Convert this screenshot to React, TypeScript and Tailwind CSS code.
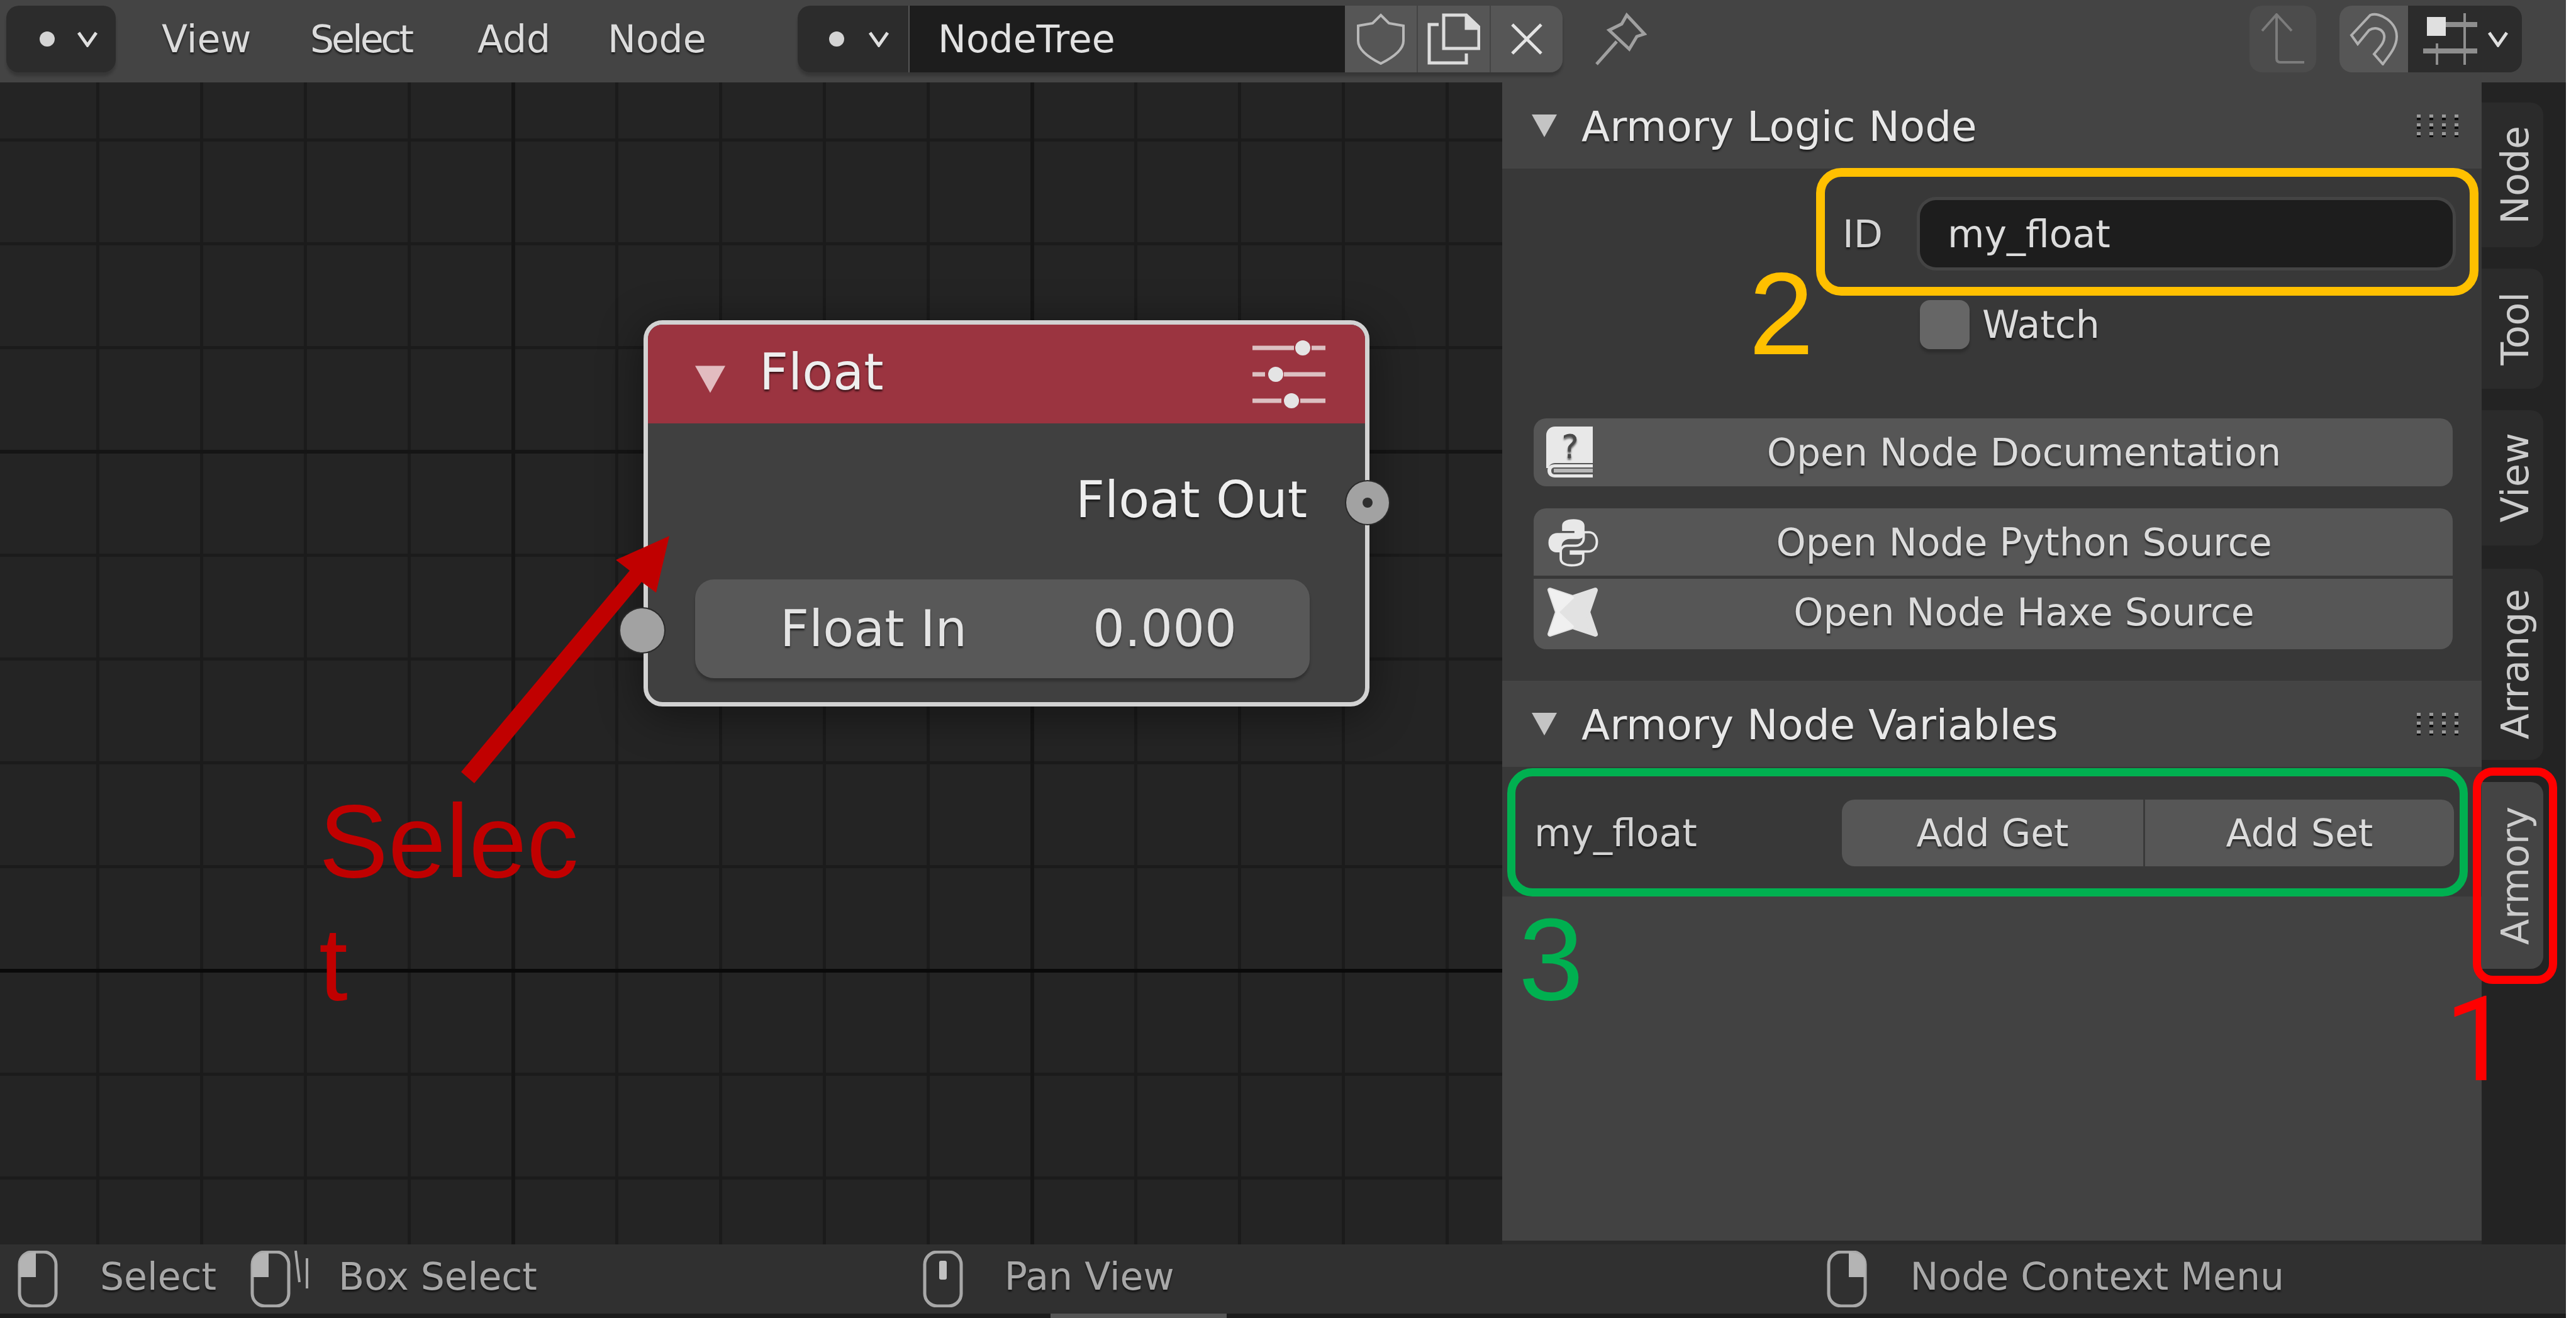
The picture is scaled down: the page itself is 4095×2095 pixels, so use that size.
import type { ReactNode } from "react";

const textShadow = "[text-shadow:0_3px_3px_rgba(0,0,0,0.6)]";

function Chevron({ className = "" }: { className?: string }): JSX.Element {
  return (
    <svg width="34" height="26" viewBox="0 0 34 26" className={className}>
      <polyline points="3,3 17,23 31,3" fill="none" stroke="#e0e0e0" strokeWidth="5" />
    </svg>
  );
}

function Dot(): JSX.Element {
  return <span className="h-[24px] w-[24px] rounded-full bg-[#d4d4d4]" />;
}

function Triangle({ className = "", fill = "#c4c4c4" }: { className?: string; fill?: string }): JSX.Element {
  return (
    <svg width="40" height="36" viewBox="0 0 40 36" className={className}>
      <polygon points="0,0 40,0 20,36" fill={fill} />
    </svg>
  );
}

function Grip(): JSX.Element {
  const columns = [0, 20, 40, 60];
  const rows = [0, 14, 28];
  return (
    <svg width="68" height="36" viewBox="0 0 68 36">
      {columns.map((x) =>
        rows.map((y) => (
          <g key={`${x}-${y}`}>
            <rect x={x} y={y} width="6" height="5" fill="#9a9a9a" />
            <rect x={x} y={y + 5} width="6" height="4" fill="#0c0c0c" />
          </g>
        )),
      )}
    </svg>
  );
}

function Mouse({ button }: { button: "left" | "middle" | "right" | "box" }): JSX.Element {
  return (
    <svg width="94" height="90" viewBox="0 0 94 90" fill="none">
      <rect x="3" y="2" width="58" height="86" rx="20" stroke="#a8a8a8" strokeWidth="5" />
      {button === "left" || button === "box" ? <path d="M3 42V20C3 10 10 3 29 2V42Z" fill="#b4b4b4" /> : null}
      {button === "right" ? <path d="M61 42V20C61 10 54 3 35 2V42Z" fill="#b4b4b4" /> : null}
      {button === "middle" ? <rect x="26" y="16" width="12" height="30" rx="3" fill="#c0c0c0" /> : null}
      {button === "box" ? (
        <g stroke="#a8a8a8" strokeWidth="4">
          <path d="M72 0L78 50" />
          <path d="M90 12V60" />
        </g>
      ) : null}
    </svg>
  );
}

function Hint({ icon, label, className }: { icon: ReactNode; label: string; className: string }): JSX.Element {
  return (
    <div className={`flex items-center ${className}`}>
      {icon}
      <span className={`mb-[8px] text-[#a8a8a8] ${textShadow}`}>{label}</span>
    </div>
  );
}

function BookIcon(): JSX.Element {
  return (
    <svg width="74" height="82" viewBox="0 0 74 82" className="overflow-visible">
      <path d="M14 0H74V58H14C8 58 4 62 4 66H0V14C0 6 6 0 14 0Z" fill="#e8e8e8" />
      <path d="M74 60H14C6 60 2 64 2 70C2 77 7 81 14 81H74V76H14C10 76 8 74 8 70C8 67 10 65 14 65H74Z" fill="#e8e8e8" />
      <rect x="12" y="67" width="62" height="6" fill="#b8b8b8" />
      <text x="38" y="50" textAnchor="middle" fontFamily="DejaVu Sans, sans-serif" fontSize="52" fill="#4a4a4a">
        ?
      </text>
    </svg>
  );
}

function PythonIcon(): JSX.Element {
  const snake =
    "M12.5 1C8.8 1 7.2 2.3 7.2 4.2V6.6H12.8V7.6H5C3 7.6 1 9 1 12.2C1 15.2 2.8 16.8 4.6 16.8H7V14C7 12 8.6 10.4 10.6 10.4H14.6C16.2 10.4 17.4 9.2 17.4 7.6V4.2C17.4 2.2 15.6 1 12.5 1Z";
  return (
    <svg width="84" height="80" viewBox="0 0 24 24" preserveAspectRatio="none">
      <path d={snake} fill="#e8e8e8" />
      <path d={snake} transform="rotate(180 12 12)" fill="none" stroke="#e8e8e8" strokeWidth="1.1" />
    </svg>
  );
}

function HaxeIcon(): JSX.Element {
  return (
    <svg width="84" height="82" viewBox="0 0 84 82">
      <polygon
        points="6,6 42,18 78,6 66,41 78,76 42,64 6,76 18,41"
        fill="#e2e2e2"
        stroke="#e2e2e2"
        strokeWidth="8"
        strokeLinejoin="round"
      />
      <polygon points="6,6 42,18 18,41" fill="#f0f0f0" stroke="#f0f0f0" strokeWidth="4" strokeLinejoin="round" />
      <polygon points="6,76 42,64 18,41" fill="#f0f0f0" stroke="#f0f0f0" strokeWidth="4" strokeLinejoin="round" />
    </svg>
  );
}

function PanelButton({ icon, label, className }: { icon: ReactNode; label: string; className: string }): JSX.Element {
  return (
    <div
      className={`relative flex items-center justify-center bg-[#565656] pl-[98px] text-[#dcdcdc] ${textShadow} ${className}`}
    >
      <span className="absolute left-[20px]">{icon}</span>
      {label}
    </div>
  );
}

function PanelHeader({ title, height }: { title: string; height: string }): JSX.Element {
  return (
    <div className={`flex items-center bg-[#444444] pl-[47px] pr-[35px] ${height}`}>
      <Triangle />
      <span className={`ml-[39px] pt-[4px] text-[66px] text-[#e8e8e8] ${textShadow}`}>{title}</span>
      <span className="ml-auto">
        <Grip />
      </span>
    </div>
  );
}

function Tab({ label, className }: { label: string; className: string }): JSX.Element {
  return (
    <div className={`flex w-[98px] items-center justify-center rounded-r-[20px] pl-[8px] ${className}`}>
      <span className="rotate-180 text-[60px] leading-none [writing-mode:vertical-rl]">{label}</span>
    </div>
  );
}

function NodeCard(): JSX.Element {
  return (
    <div className="absolute left-[1023px] top-[378px] h-[614px] w-[1154px] rounded-[30px] border-[7px] border-[#d2d2d2] bg-[#404040] shadow-[0_12px_70px_rgba(0,0,0,0.45)]">
      <div className="flex h-[157px] items-center rounded-t-[23px] bg-[#9b3440] pl-[75px] pr-[63px]">
        <Triangle fill="#e2bcc0" className="mt-[16px] h-[48px] w-[48px]" />
        <span className={`mb-[6px] ml-[54px] text-[80px] text-[#eeeeee] ${textShadow}`}>Float</span>
        <svg width="116" height="110" viewBox="0 0 116 110" className="ml-auto">
          <g stroke="#dcc0c2" strokeWidth="7">
            <path d="M0 13H66M94 13H116" />
            <path d="M0 55H20M50 55H116" />
            <path d="M0 97H46M76 97H116" />
          </g>
          <circle cx="80" cy="13" r="12" fill="#e4e4e4" />
          <circle cx="37" cy="55" r="12" fill="#e4e4e4" />
          <circle cx="62" cy="97" r="12" fill="#e4e4e4" />
        </svg>
      </div>
      <div className="mt-[72px] flex h-[100px] items-center justify-end pr-[92px] text-[80px] text-[#eeeeee]">
        <span className={textShadow}>Float Out</span>
      </div>
      <div
        className={`ml-[75px] mr-[88px] mt-[76px] flex h-[157px] items-center justify-between rounded-[30px] bg-[#585858] pl-[135px] pr-[116px] text-[80px] text-[#e4e4e4] shadow-[0_5px_4px_rgba(0,0,0,0.25)] ${textShadow}`}
      >
        <span>Float In</span>
        <span>0.000</span>
      </div>
      <span className="absolute left-[1110px] top-[249px] flex h-[68px] w-[68px] items-center justify-center rounded-full bg-[#a2a2a2] ring-2 ring-[#2a2a2a]">
        <span className="h-[16px] w-[16px] rounded-full bg-[#2e2e2e]" />
      </span>
      <span className="absolute left-[-44px] top-[451px] h-[70px] w-[70px] rounded-full bg-[#a2a2a2] ring-2 ring-[#2a2a2a]" />
    </div>
  );
}

function Annotations(): JSX.Element {
  return (
    <>
      <svg width="4095" height="2095" className="pointer-events-none absolute left-0 top-0">
        <polygon points="733,1227 1001,907 979,890 1064,852 1043,942 1020,925 754,1245" fill="#c00000" />
      </svg>
      <div className="absolute left-[507px] top-[1239px] w-[440px] break-all font-['Liberation_Sans'] text-[165px] leading-[196px] text-[#c00000]">
        Select
      </div>
      <div className="absolute left-[2887px] top-[267px] h-[203px] w-[1053px] rounded-[40px] border-[14px] border-[#ffc000]" />
      <div className="absolute left-[2396px] top-[1221px] h-[204px] w-[1527px] rounded-[40px] border-[13px] border-[#00b050]" />
      <div className="absolute left-[3931px] top-[1220px] h-[344px] w-[134px] rounded-[32px] border-[13px] border-[#ff0000]" />
      <span className="absolute left-[2780px] top-[406px] font-['Liberation_Sans'] text-[186px] leading-none text-[#ffc000]">
        2
      </span>
      <span className="absolute left-[2414px] top-[1432px] font-['Liberation_Sans'] text-[186px] leading-none text-[#00b050]">
        3
      </span>
      <span className="absolute left-[3886px] top-[1560px] font-['Roboto'] text-[187px] leading-none text-[#ff0000]">
        1
      </span>
    </>
  );
}

export default function App(): JSX.Element {
  return (
    <div className="relative flex h-[2095px] w-[4095px] overflow-hidden bg-white font-['DejaVu_Sans',sans-serif] text-[60px] leading-none">
      <div className="flex h-full w-[4079px] flex-col">
        {/* top bar */}
        <header className="flex h-[131px] shrink-0 items-start bg-[#444444] pt-[9px] pr-[70px]">
          <div className="ml-[10px] flex h-[106px] w-[174px] items-center rounded-[20px] bg-[#2c2c2c] pl-[53px] shadow-[0_6px_4px_rgba(0,0,0,0.2)]">
            <Dot />
            <Chevron className="ml-[35px]" />
          </div>
          <nav className={`ml-[73px] flex h-[106px] items-center text-[#dcdcdc] ${textShadow}`}>
            <span className="w-[236px]">View</span>
            <span className="w-[266px] tracking-[-4px]">Select</span>
            <span className="w-[207px]">Add</span>
            <span className="w-[302px]">Node</span>
          </nav>
          <div className="flex h-[106px] w-[1216px] overflow-hidden rounded-[20px] shadow-[0_6px_4px_rgba(0,0,0,0.2)]">
            <div className="flex w-[178px] items-center border-r-2 border-[#555555] bg-[#2c2c2c] pl-[50px]">
              <Dot />
              <Chevron className="ml-[38px]" />
            </div>
            <div className="flex w-[692px] items-center bg-[#1d1d1d] pl-[45px] text-[#e2e2e2]">NodeTree</div>
            <div className="flex w-[116px] items-center justify-center border-r-2 border-[#444444] bg-[#565656]">
              <svg width="78" height="82" viewBox="0 0 78 82" fill="none" stroke="#b8b8b8" strokeWidth="4">
                <path d="M39 3L52 16L75 20V44C75 60 55 72 39 80C23 72 3 60 3 44V20L26 16Z" />
              </svg>
            </div>
            <div className="flex w-[116px] items-center justify-center border-r-2 border-[#444444] bg-[#565656]">
              <svg width="84" height="82" viewBox="0 0 84 82" fill="none" stroke="#dcdcdc" strokeWidth="5">
                <path d="M26 3H62L82 22V56H26Z" />
                <path d="M62 3V24H82" fill="#dcdcdc" />
                <path d="M18 18H3V79H62V64" />
              </svg>
            </div>
            <div className="flex w-[114px] items-center justify-center bg-[#565656]">
              <svg width="50" height="50" viewBox="0 0 50 50" stroke="#e4e4e4" strokeWidth="5">
                <path d="M2 2L48 48M48 2L2 48" />
              </svg>
            </div>
          </div>
          <svg width="84" height="84" viewBox="0 0 84 84" fill="none" stroke="#a0a0a0" strokeWidth="5" className="ml-[50px] mt-[11px]">
            <path d="M52 4L80 34L68 38L56 58L24 28L44 18Z" />
            <path d="M36 46L4 82" />
          </svg>
          <div className="ml-auto flex h-[106px] w-[106px] items-center justify-center rounded-[20px] bg-[#4c4c4c]">
            <svg width="72" height="82" viewBox="0 0 72 82" fill="none" stroke="#7c7c7c" strokeWidth="4">
              <path d="M3 28L26 2L50 28M26 2V72C26 76 28 78 32 78H70" />
            </svg>
          </div>
          <div className="ml-[37px] flex h-[106px] overflow-hidden rounded-[20px]">
            <div className="flex w-[109px] items-center justify-center bg-[#565656]">
              <svg width="80" height="84" viewBox="0 0 80 84" fill="none" stroke="#b0b0b0" strokeWidth="4">
                <path d="M4 36L34 4C50 -2 76 16 76 38C76 56 62 70 54 82L40 66C50 54 58 46 56 36C54 26 42 22 32 28L14 50Z" />
              </svg>
            </div>
            <div className="flex w-[181px] items-center bg-[#2c2c2c] pl-[24px]">
              <svg width="86" height="82" viewBox="0 0 86 82" stroke="#8e8e8e" strokeWidth="4">
                <path d="M22 48V82M66 0V82" />
                <path d="M36 18H86M0 60H86" strokeWidth="8" />
                <rect x="6" y="6" width="30" height="30" fill="#e0e0e0" stroke="none" />
              </svg>
              <Chevron className="ml-[16px]" />
            </div>
          </div>
        </header>

        <div className="flex min-h-0 flex-1">
          {/* node editor canvas */}
          <main className="relative w-[2388px] bg-[#242424] bg-[image:linear-gradient(to_bottom,#0a0a0a_0,#0a0a0a_6px,transparent_6px),linear-gradient(to_right,#151515_0,#151515_6px,transparent_6px),linear-gradient(to_bottom,#151515_0,#151515_6px,transparent_6px),linear-gradient(to_right,#1b1b1b_0,#1b1b1b_5px,transparent_5px),linear-gradient(to_bottom,#1b1b1b_0,#1b1b1b_5px,transparent_5px)] bg-[size:1900px_1900px,825px_825px,825px_825px,165px_165px,165px_165px] bg-[position:0_1409px,813px_0,0_584px,153px_0,0_89px]">
            <NodeCard />
          </main>

          {/* sidebar */}
          <aside className="flex w-[1557px] flex-col border-b-[6px] border-[#2a2a2a] bg-[#424242] text-[60px]">
            <PanelHeader title="Armory Logic Node" height="h-[137px]" />
            <section className="h-[814px] bg-[#383838] pt-[50px]">
              <div className="flex items-center">
                <span className={`ml-[541px] w-[123px] text-[#d4d4d4] ${textShadow}`}>ID</span>
                <div className="flex h-[107px] w-[847px] items-center rounded-[26px] bg-[#1d1d1d] pl-[44px] text-[#dcdcdc] ring-[5px] ring-[#444444]">
                  my_float
                </div>
              </div>
              <div className="ml-[664px] mt-[52px] flex items-center">
                <span className="h-[78px] w-[79px] rounded-[16px] bg-[#666666] shadow-[0_6px_4px_rgba(0,0,0,0.2)]" />
                <span className={`ml-[20px] text-[#dcdcdc] ${textShadow}`}>Watch</span>
              </div>
              <div className="ml-[50px] mr-[46px] mt-[110px] flex flex-col">
                <PanelButton icon={<BookIcon />} label="Open Node Documentation" className="h-[108px] rounded-[20px]" />
                <PanelButton icon={<PythonIcon />} label="Open Node Python Source" className="mt-[35px] h-[107px] rounded-t-[20px]" />
                <PanelButton icon={<HaxeIcon />} label="Open Node Haxe Source" className="mt-[5px] h-[112px] rounded-b-[20px] pb-[6px]" />
              </div>
            </section>
            <PanelHeader title="Armory Node Variables" height="h-[137px]" />
            <section className="flex h-[206px] items-start bg-[#383838] pt-[52px]">
              <span className={`ml-[51px] flex h-[106px] w-[489px] items-center text-[#d4d4d4] ${textShadow}`}>my_float</span>
              <div className={`flex h-[106px] w-[973px] overflow-hidden rounded-[20px] text-[#dcdcdc] ${textShadow}`}>
                <div className="flex w-[482px] items-center justify-center border-r-[3px] border-[#3a3a3a] bg-[#565656]">Add Get</div>
                <div className="flex flex-1 items-center justify-center bg-[#565656]">Add Set</div>
              </div>
            </section>
          </aside>

          {/* region tabs */}
          <div className="flex flex-1 flex-col bg-[#232323] pt-[32px] text-[#cccccc]">
            <Tab label="Node" className="h-[230px] bg-[#2b2b2b]" />
            <Tab label="Tool" className="mt-[34px] h-[191px] bg-[#2b2b2b]" />
            <Tab label="View" className="mt-[34px] h-[215px] bg-[#2b2b2b]" />
            <Tab label="Arrange" className="mt-[37px] h-[304px] bg-[#2b2b2b]" />
            <Tab label="Armory" className="mt-[35px] h-[297px] bg-[#444444]" />
          </div>
        </div>

        {/* status bar */}
        <footer className="relative flex h-[110px] shrink-0 items-center bg-[#303030]">
          <Hint icon={<Mouse button="left" />} label="Select" className="ml-[28px] gap-[37px]" />
          <Hint icon={<Mouse button="box" />} label="Box Select" className="ml-[54px] gap-[46px]" />
          <Hint icon={<Mouse button="middle" />} label="Pan View" className="ml-[613px] gap-[36px]" />
          <Hint icon={<Mouse button="right" />} label="Node Context Menu" className="ml-[1037px] gap-[39px]" />
        </footer>
        <div className="h-[7px] shrink-0 bg-[#1c1c1c]">
          <div className="ml-[1670px] h-full w-[280px] bg-[#555555]" />
        </div>
      </div>
      <Annotations />
    </div>
  );
}
